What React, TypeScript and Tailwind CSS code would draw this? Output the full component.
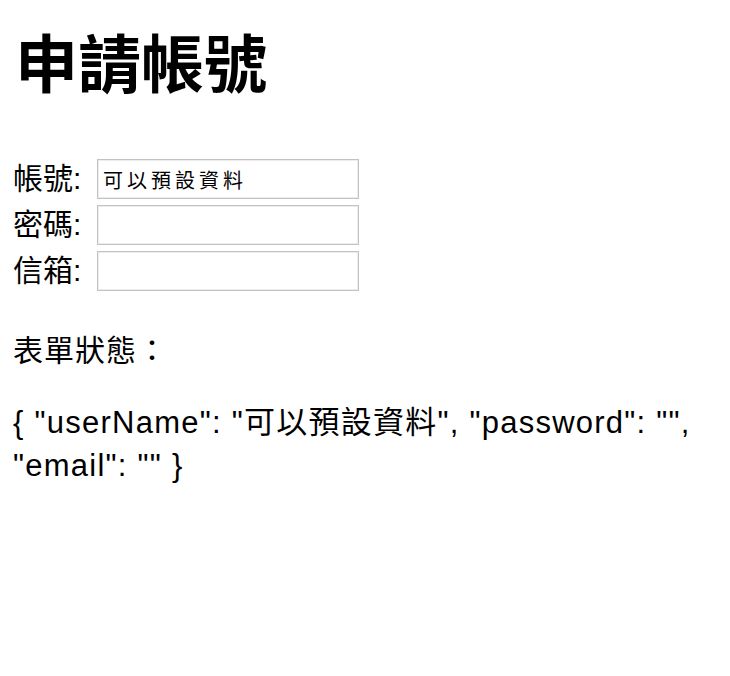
import React from "react";

export default function App() {
  const font = "font-['Liberation_Sans','Noto_Sans_CJK_TC',sans-serif]";
  const rows = [
    { label: "帳號:", value: "可以預設資料" },
    { label: "密碼:", value: "" },
    { label: "信箱:", value: "" },
  ];
  return (
    <div className={`flex min-h-screen flex-col bg-white px-[13px] pt-[34px] text-black ${font}`}>
      <h1 className="pl-[2px] text-[63px] font-bold leading-[62px]">申請帳號</h1>
      <form className="mt-[60px] flex flex-col">
        {rows.map((r) => (
          <div key={r.label} className="flex h-[46px] items-center">
            <label className="w-[84px] text-[30px] leading-[46px]">{r.label}</label>
            <input
              defaultValue={r.value}
              className={`h-[40px] w-[262px] border border-[#c2c2c2] pl-[5px] text-[20px] tracking-[4px] text-black shadow-[inset_0_0_0_1px_#ededed] outline-none ${font}`}
            />
          </div>
        ))}
      </form>
      <p className="mt-[37px] text-[30px] leading-[40px] tracking-[1px]">表單狀態：</p>
      <p className="mt-[30px] text-[31px] leading-[43px] tracking-[1.25px]">
        {'{ "userName": "可以預設資料", "password": "", "email": "" }'}
      </p>
    </div>
  );
}
